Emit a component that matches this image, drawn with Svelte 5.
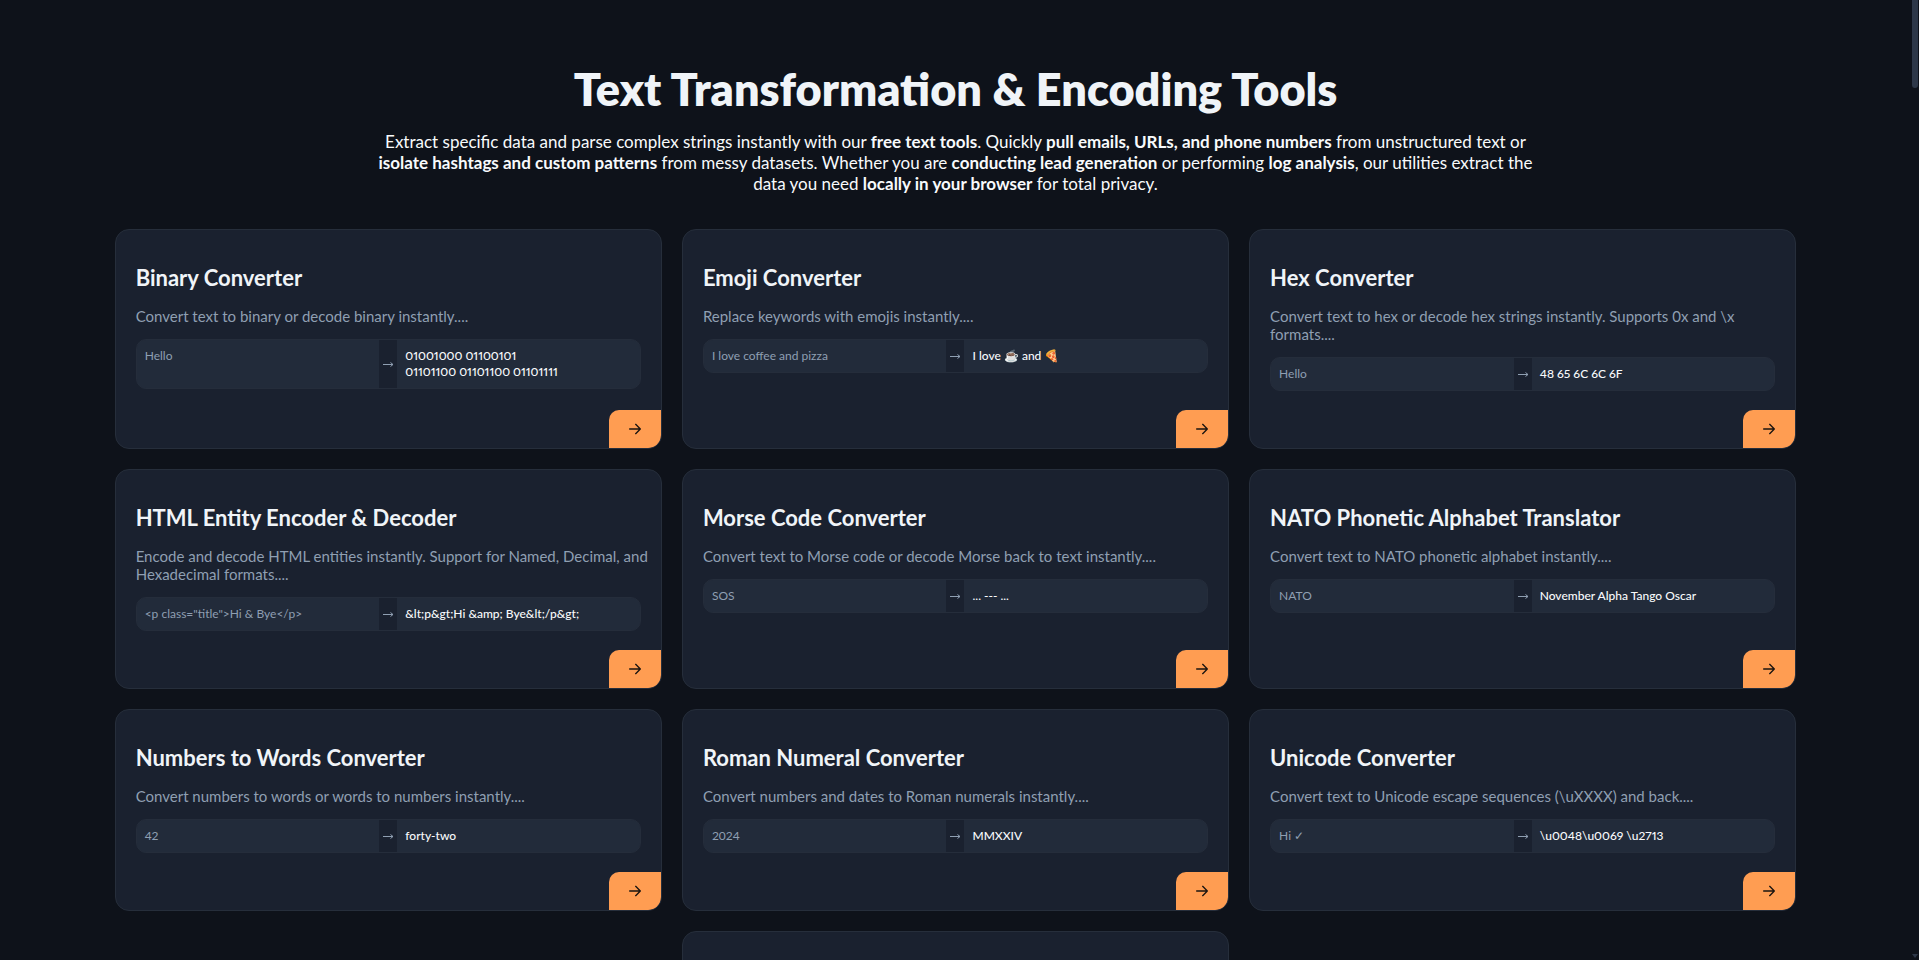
<script>
  let tools = [
    { name: 'Binary Converter', text: 'Convert text to binary or decode binary instantly....', input: 'Hello', output: '01001000 01100101\n01101100 01101100 01101111' },
    { name: 'Emoji Converter', text: 'Replace keywords with emojis instantly....', input: 'I love coffee and pizza', output: 'I love ☕ and 🍕' },
    { name: 'Hex Converter', text: 'Convert text to hex or decode hex strings instantly. Supports 0x and \\x formats....', input: 'Hello', output: '48 65 6C 6C 6F' },
    { name: 'HTML Entity Encoder & Decoder', text: 'Encode and decode HTML entities instantly. Support for Named, Decimal, and Hexadecimal formats....', input: '<p class="title">Hi & Bye</p>', output: '&lt;p&gt;Hi &amp; Bye&lt;/p&gt;' },
    { name: 'Morse Code Converter', text: 'Convert text to Morse code or decode Morse back to text instantly....', input: 'SOS', output: '... --- ...' },
    { name: 'NATO Phonetic Alphabet Translator', text: 'Convert text to NATO phonetic alphabet instantly....', input: 'NATO', output: 'November Alpha Tango Oscar' },
    { name: 'Numbers to Words Converter', text: 'Convert numbers to words or words to numbers instantly....', input: '42', output: 'forty-two' },
    { name: 'Roman Numeral Converter', text: 'Convert numbers and dates to Roman numerals instantly....', input: '2024', output: 'MMXXIV' },
    { name: 'Unicode Converter', text: 'Convert text to Unicode escape sequences (\\uXXXX) and back....', input: 'Hi ✓', output: '\\u0048\\u0069 \\u2713' }
  ];
</script>

<div class="page">
  <main>
    <header>
      <h1>Text Transformation &amp; Encoding Tools</h1>
      <p>
        Extract specific data and parse complex strings instantly with our <strong>free text tools</strong>. Quickly
        <strong>pull emails, URLs, and phone numbers</strong> from unstructured text or
        <strong>isolate hashtags and custom patterns</strong> from messy datasets. Whether you are
        <strong>conducting lead generation</strong> or performing <strong>log analysis</strong>, our utilities extract
        the data you need <strong>locally in your browser</strong> for total privacy.
      </p>
    </header>

    <section class="tools">
      {#each tools as tool}
        <article class="card">
          <h2>{tool.name}</h2>
          <p class="description">{tool.text}</p>
          <div class="example">
            <span class="input">{tool.input}</span>
            <span class="arrow">
              <svg viewBox="0 0 12 8" width="12" height="8" fill="none" stroke="currentColor">
                <path d="M1 4.5h10M8.5 2.5l2.5 2-2.5 2" />
              </svg>
            </span>
            <span class="output">{tool.output}</span>
          </div>
          <a class="open" href="#top" aria-label={tool.name}>
            <svg viewBox="0 0 24 24" width="16" height="16" fill="none" stroke="currentColor" stroke-width="2" stroke-linecap="round" stroke-linejoin="round">
              <path d="M4 12h16M13 5l7 7-7 7" />
            </svg>
          </a>
        </article>
      {/each}
      <article class="card"></article>
    </section>
  </main>

  <div class="scrollbar">
    <div class="thumb"></div>
    <svg viewBox="0 0 6 4" width="6" height="4"><path d="M0 0h6L3 4z" fill="#2d3748" /></svg>
  </div>
</div>

<style>
  :global(body) {
    background: #0e121a;
  }

  .page {
    height: 100vh;
    overflow: hidden;
    padding-right: 8px;
    background: #0e121a;
    color: #f8fafc;
    font-family: Lato, "Liberation Sans", sans-serif;
  }

  main {
    width: 88%;
    margin: 0 auto;
    padding-top: 56px;
  }

  header {
    max-width: 1184px;
    margin: 0 auto 35px;
    text-align: center;
  }

  h1 {
    margin: 0 0 9px;
    color: #f0f4f8;
    font-size: 45px;
    font-weight: 800;
    line-height: 66px;
  }

  header p {
    margin: 0;
    font-size: 17px;
    line-height: 21px;
  }

  .tools {
    display: flex;
    flex-wrap: wrap;
    justify-content: center;
    gap: 20px;
  }

  .card {
    position: relative;
    box-sizing: border-box;
    width: calc((100% - 40px) / 3);
    min-height: 202px;
    padding: 33px 20px 57px;
    overflow: hidden;
    background: #1a212f;
    border: 1px solid #262e3b;
    border-radius: 14px;
  }

  h2 {
    margin: 0 0 14px;
    color: #f0f4f8;
    font-size: 22px;
    font-weight: 700;
    line-height: 30px;
  }

  .description {
    margin: 0 -14px 14px 0;
    color: #8f9fb2;
    font-size: 15px;
    line-height: 18px;
  }

  .example {
    display: grid;
    grid-template-columns: 1fr 18px 1fr;
    overflow: hidden;
    background: #222b3a;
    border: 1px solid #252d3b;
    border-radius: 10px;
    font-size: 12px;
    line-height: 16px;
  }

  .input,
  .output {
    padding: 8px;
    white-space: pre-line;
  }

  .input {
    color: #8f9fb2;
  }

  .output {
    font-weight: 500;
    font-variant-numeric: proportional-nums;
  }

  .arrow {
    display: flex;
    align-items: center;
    justify-content: center;
    background: #1a212f;
    color: #8f9fb2;
  }

  .open {
    position: absolute;
    right: 0;
    bottom: 0;
    display: flex;
    align-items: center;
    justify-content: center;
    width: 52px;
    height: 38px;
    background: #ff9d52;
    border-radius: 10px 0 12px 0;
    color: #1a1410;
  }

  .scrollbar {
    position: fixed;
    top: 0;
    right: 1px;
    bottom: 0;
    display: flex;
    flex-direction: column;
    justify-content: space-between;
    width: 6px;
    padding-bottom: 2px;
  }

  .thumb {
    height: 88px;
    background: #2d3748;
    border-radius: 0 0 3px 3px;
  }
</style>
